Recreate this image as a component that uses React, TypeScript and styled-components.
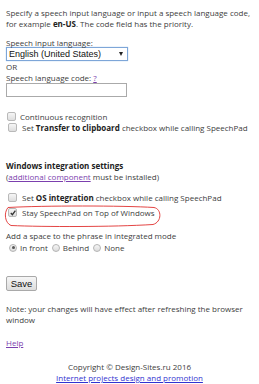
import styled, { createGlobalStyle } from "styled-components";

const GlobalStyle = createGlobalStyle`
  html, body {
    margin: 0;
    padding: 0;
    background: #ffffff;
  }
  body {
    font-family: "Open Sans", "Noto Sans", sans-serif;
    font-size: 8px;
    line-height: 11px;
    color: #404040;
  }
`;

const Page = styled.div`
  width: 259px;
  padding: 7px 6px 0 6px;
  box-sizing: border-box;
`;

const Paragraph = styled.p<{ top?: number }>`
  margin: ${(props) => props.top ?? 0}px 0 0 0;
`;

const Strong = styled.span`
  font-weight: 700;
  color: #222;
`;

const Label = styled.div<{ top?: number }>`
  margin-top: ${(props) => props.top ?? 0}px;
`;

const Select = styled.div`
  display: flex;
  align-items: center;
  justify-content: space-between;
  width: 122px;
  height: 14px;
  box-sizing: border-box;
  border: 1px solid #7ea6d8;
  box-shadow: 0 0 1px #9cc0ec;
  padding: 0 4px 0 2px;
  margin-top: -1px;
  font-family: "Liberation Sans", Arial, sans-serif;
  font-size: 9px;
  color: #111;
`;

const Arrow = styled.span`
  width: 0;
  height: 0;
  border-left: 2.5px solid transparent;
  border-right: 2.5px solid transparent;
  border-top: 4px solid #222;
`;

const TextInput = styled.div`
  width: 121px;
  height: 14px;
  box-sizing: border-box;
  border: 1px solid #aaaaaa;
`;

const Link = styled.a<{ $visited?: boolean }>`
  color: ${(props) => (props.$visited ? "#7b3fae" : "#3232d0")};
  text-decoration: underline;
`;

const CheckRow = styled.div<{ $indent?: number; $top?: number; $gap?: number }>`
  display: flex;
  align-items: center;
  gap: ${(props) => props.$gap ?? 4}px;
  margin-top: ${(props) => props.$top ?? 0}px;
  padding-left: ${(props) => props.$indent ?? 0}px;
  height: 11px;
`;

const Box = styled.span`
  width: 7px;
  height: 7px;
  border: 1px solid #b9b9b9;
  border-radius: 2px;
  background: linear-gradient(#f6f6f6, #dedede);
  flex-shrink: 0;
  display: flex;
  align-items: center;
  justify-content: center;
`;

const Heading = styled.div`
  font-weight: 700;
  color: #222;
  margin-top: 27px;
`;

const Highlight = styled.div`
  position: relative;
  margin-top: 4px;
`;

const Ellipse = styled.svg`
  position: absolute;
  left: -3px;
  top: -2px;
  pointer-events: none;
`;

const RadioGroup = styled.div`
  display: flex;
  align-items: center;
  gap: 4px;
  padding-left: 3px;
  margin-top: 1px;
  height: 11px;
`;

const RadioItem = styled.label`
  display: flex;
  align-items: center;
  gap: 3px;
`;

const Radio = styled.span<{ $checked?: boolean }>`
  width: 6px;
  height: 6px;
  border-radius: 50%;
  border: 1px solid #b4b4b4;
  background: linear-gradient(#f6f6f6, #dcdcdc);
  display: flex;
  align-items: center;
  justify-content: center;
  &::after {
    content: "";
    display: ${(props) => (props.$checked ? "block" : "none")};
    width: 3px;
    height: 3px;
    border-radius: 50%;
    background: #555;
  }
`;

const Button = styled.button`
  display: block;
  margin-top: 23px;
  width: 31px;
  height: 15px;
  padding: 0;
  font-family: "Liberation Sans", Arial, sans-serif;
  font-size: 9.5px;
  color: #111;
  border: 1px solid #a9a9a9;
  border-radius: 2px;
  background: linear-gradient(#f6f6f6, #dddddd);
`;

const Footer = styled.div`
  text-align: center;
  margin-top: 13px;
`;

const Check = () => (
  <svg width="6" height="6" viewBox="0 0 6 6">
    <path d="M0.8 3 L2.4 4.7 L5.4 0.6" stroke="#333" strokeWidth="1.3" fill="none" />
  </svg>
);

export default function App() {
  return (
    <>
      <GlobalStyle />
      <Page>
        <Paragraph>
          Specify a speech input language or input a speech language code, for example{" "}
          <Strong>en-US</Strong>. The code field has the priority.
        </Paragraph>
        <Label top={8}>Speech input language:</Label>
        <Select>
          English (United States)
          <Arrow />
        </Select>
        <Label>OR</Label>
        <Label>
          Speech language code: <Link $visited>?</Link>
        </Label>
        <TextInput />
        <CheckRow $top={14} $indent={1}>
          <Box />
          Continuous recognition
        </CheckRow>
        <CheckRow $indent={2} $gap={5}>
          <Box />
          <span>
            Set <Strong>Transfer to clipboard</Strong> checkbox while calling SpeechPad
          </span>
        </CheckRow>
        <Heading>Windows integration settings</Heading>
        <Label>
          (<Link $visited>additional component</Link> must be installed)
        </Label>
        <CheckRow $top={10} $indent={2} $gap={5}>
          <Box />
          <span>
            Set <Strong>OS integration</Strong> checkbox while calling SpeechPad
          </span>
        </CheckRow>
        <Highlight>
          <CheckRow $indent={2} $gap={5}>
            <Box>
              <Check />
            </Box>
            Stay SpeechPad on Top of Windows
          </CheckRow>
          <Ellipse width="160" height="23" viewBox="0 0 160 23">
            <path
              d="M5 2.5 C40 0.5 120 0.5 151 2.5 C159 4 159 17 150 19.5 C110 22 40 22 8 20.5 C2 18 0.5 8 5 2.5"
              stroke="#e0302f"
              strokeWidth="0.9"
              fill="none"
            />
          </Ellipse>
        </Highlight>
        <Paragraph top={12}>Add a space to the phrase in integrated mode</Paragraph>
        <RadioGroup>
          <RadioItem>
            <Radio $checked />
            In front
          </RadioItem>
          <RadioItem>
            <Radio />
            Behind
          </RadioItem>
          <RadioItem>
            <Radio />
            None
          </RadioItem>
        </RadioGroup>
        <Button>Save</Button>
        <Paragraph top={12}>
          Note: your changes will have effect after refreshing the browser window
        </Paragraph>
        <Paragraph top={12}>
          <Link $visited>Help</Link>
        </Paragraph>
        <Footer>
          Copyright © Design-Sites.ru 2016
          <br />
          <Link>Internet projects design and promotion</Link>
        </Footer>
      </Page>
    </>
  );
}
